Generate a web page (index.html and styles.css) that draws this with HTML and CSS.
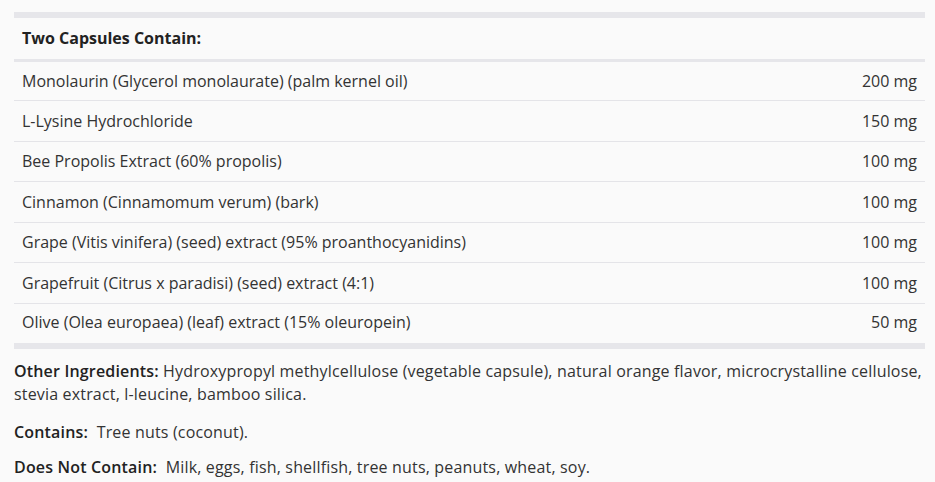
FILE: index.html
```html
<!DOCTYPE html>
<html lang="en">
<head>
    <meta charset="UTF-8">
    <meta name="viewport" content="width=device-width, initial-scale=1.0">
    <title>Supplement Facts</title>
    <link rel="stylesheet" href="styles.css">
</head>
<body>
<!-- 成分表 -->
<table class="facts">
    <thead>
        <tr><th colspan="2">Two Capsules Contain:</th></tr>
    </thead>
    <tbody>
        <tr><td>Monolaurin (Glycerol monolaurate) (palm kernel oil)</td><td class="amount">200 mg</td></tr>
        <tr><td>L-Lysine Hydrochloride</td><td class="amount">150 mg</td></tr>
        <tr><td>Bee Propolis Extract (60% propolis)</td><td class="amount">100 mg</td></tr>
        <tr><td>Cinnamon (Cinnamomum verum) (bark)</td><td class="amount">100 mg</td></tr>
        <tr><td>Grape (Vitis vinifera) (seed) extract (95% proanthocyanidins)</td><td class="amount">100 mg</td></tr>
        <tr><td>Grapefruit (Citrus x paradisi) (seed) extract (4:1)</td><td class="amount">100 mg</td></tr>
        <tr class="last"><td>Olive (Olea europaea) (leaf) extract (15% oleuropein)</td><td class="amount">50 mg</td></tr>
    </tbody>
</table>
<!-- 其他说明 -->
<p class="note"><strong>Other Ingredients:</strong> Hydroxypropyl methylcellulose (vegetable capsule), natural orange flavor, microcrystalline cellulose, stevia extract, l-leucine, bamboo silica.</p>
<p class="note contains"><strong>Contains:</strong>&nbsp; Tree nuts (coconut).</p>
<p class="note free"><strong>Does Not Contain:</strong>&nbsp; Milk, eggs, fish, shellfish, tree nuts, peanuts, wheat, soy.</p>
</body>
</html>
```
FILE: styles.css
```css
* { margin: 0; padding: 0; box-sizing: border-box; }
body {
    padding: 12px 10px 0 14px;
    background: #fafafa;
    color: #333;
    font-family: "Open Sans", "Liberation Sans", sans-serif;
    font-size: 16px;
}

/* 表格 */
.facts {
    width: 911px;
    border-collapse: collapse;
    border-top: 6px solid #e6e6ea;
    border-bottom: 6px solid #e6e6ea;
}
.facts th {
    text-align: left;
    font-weight: bold;
    color: #222;
    height: 45px;
    padding: 0 8px;
    border-bottom: 3px solid #e6e6ea;
}
.facts td {
    height: 40.5px;
    padding: 0 8px;
    border-top: 1px solid #e4e4e8;
}
.facts tbody tr:first-child td { border-top: none; }
.facts tr.last td { height: 43px; padding-bottom: 2px; }
.facts .amount { text-align: right; white-space: nowrap; }

/* 说明 */
.note {
    line-height: 23px;
    margin-top: 11px;
    letter-spacing: 0.17px;
}
.note.contains { margin-top: 15px; }
.note.free { margin-top: 12px; }
.note strong { font-weight: 600; color: #222; }
```
